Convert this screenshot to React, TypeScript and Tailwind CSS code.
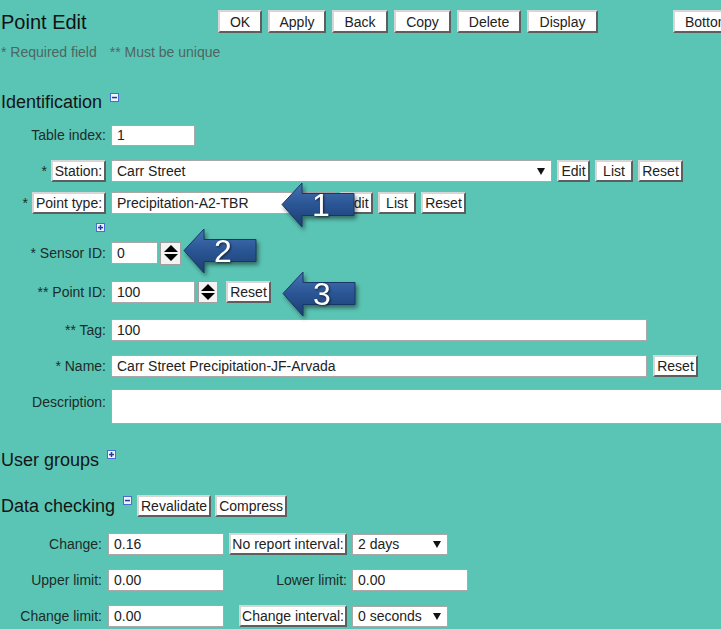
import React from "react";

const btnBase =
  "flex items-center justify-center bg-white border-2 border-t-[#d6d6d6] border-l-[#d6d6d6] border-r-[#5e5e5e] border-b-[#5e5e5e] text-[14px] text-[#222] leading-none box-border whitespace-nowrap";
const inputBase =
  "flex items-center bg-white border border-[#a8a8a8] pl-[5px] text-[14px] text-[#222] box-border whitespace-nowrap overflow-hidden";

function Btn({ children, className = "" }: { children: React.ReactNode; className?: string }) {
  return <div className={`${btnBase} ${className}`}>{children}</div>;
}

function Field({ children, className = "" }: { children?: React.ReactNode; className?: string }) {
  return <div className={`${inputBase} ${className}`}>{children}</div>;
}

function Select({ children, className = "" }: { children?: React.ReactNode; className?: string }) {
  return (
    <div className={`${inputBase} justify-between pr-[6px] ${className}`}>
      <span>{children}</span>
      <svg width="8" height="7" viewBox="0 0 8 7">
        <polygon points="0,0 8,0 4,7" fill="#111" />
      </svg>
    </div>
  );
}

function Spinner({ className = "" }: { className?: string }) {
  return (
    <div className={`flex items-center justify-center bg-[#f3f3f3] border border-[#a0a0a0] box-border ${className}`}>
      <svg width="14" height="16" viewBox="0 0 14 16">
        <polygon points="0,7 7,0 14,7" fill="#000" />
        <polygon points="0,9 14,9 7,16" fill="#000" />
      </svg>
    </div>
  );
}

function Toggle({ plus, className = "" }: { plus?: boolean; className?: string }) {
  return (
    <svg width="9" height="9" viewBox="0 0 9 9" className={className}>
      <rect x="0.5" y="0.5" width="8" height="8" fill="#eef3ff" stroke="#4a6ad6" />
      <rect x="2" y="3.8" width="5" height="1.5" fill="#24389a" />
      {plus && <rect x="3.75" y="2" width="1.5" height="5" fill="#24389a" />}
    </svg>
  );
}

function Arrow({ n, className = "" }: { n: string; className?: string }) {
  return (
    <div className={`absolute w-[75px] h-[46px] ${className}`}>
      <svg width="75" height="46" viewBox="0 0 75 46" className="absolute left-0 top-0 drop-shadow-[2px_3px_2px_rgba(0,0,0,0.45)]">
        <defs>
          <linearGradient id={`g${n}`} x1="0" y1="0" x2="0" y2="1">
            <stop offset="0" stopColor="#4673b3" />
            <stop offset="0.5" stopColor="#2a5594" />
            <stop offset="1" stopColor="#1b3d72" />
          </linearGradient>
        </defs>
        <polygon
          points="1,22.5 21,1 21,11.5 73,11.5 73,33.5 21,33.5 21,45"
          fill={`url(#g${n})`}
          stroke="#183766"
          strokeWidth="1"
        />
      </svg>
      <span className="absolute left-[30px] w-[20px] top-0 h-full flex items-center justify-center text-[32px] leading-none text-white drop-shadow-[1px_1px_1px_rgba(0,0,0,0.6)]">
        {n}
      </span>
    </div>
  );
}

function Label({ children, className = "" }: { children: React.ReactNode; className?: string }) {
  return <div className={`w-[106px] shrink-0 flex justify-end items-center text-[14px] text-[#1c2c29] ${className}`}>{children}</div>;
}

function DLabel({ children }: { children: React.ReactNode }) {
  return <div className="w-[102px] shrink-0 flex justify-end items-center text-[14px] text-[#1c2c29]">{children}</div>;
}

export default function App() {
  return (
    <div className="relative w-[721px] h-[629px] overflow-hidden bg-[#5bc5b5] font-['Liberation_Sans',Arial,sans-serif] text-[#222]">
      <div className="flex flex-col">
        {/* header */}
        <div className="mt-[10px] h-[23px] flex items-center">
          <div className="w-[218px] shrink-0 pl-[1px] text-[20px] leading-none text-[#111]">Point Edit</div>
          <div className="flex items-center gap-[6px]">
            <Btn className="w-[44px] h-[23px]">OK</Btn>
            <Btn className="w-[58px] h-[23px]">Apply</Btn>
            <Btn className="w-[56px] h-[23px]">Back</Btn>
            <Btn className="w-[57px] h-[23px]">Copy</Btn>
            <Btn className="w-[64px] h-[23px]">Delete</Btn>
            <Btn className="w-[71px] h-[23px]">Display</Btn>
            <Btn className="ml-[69px] w-[70px] h-[23px] justify-start pl-[10px]">Bottom</Btn>
          </div>
        </div>

        <div className="mt-[11px] h-[16px] flex items-center pl-[1px] text-[14px] leading-[16px] text-[#4d6661]">
          <span>* Required field</span>
          <span className="ml-[13px]">** Must be unique</span>
        </div>

        {/* Identification */}
        <div className="mt-[32px] h-[21px] flex items-start">
          <span className="pl-[1px] text-[18px] leading-[21px] text-[#141414]">Identification</span>
          <Toggle className="ml-[8px] mt-[1px]" />
        </div>

        <div className="mt-[12px] h-[21px] flex items-center">
          <Label>Table index:</Label>
          <Field className="ml-[5px] w-[84px] h-[21px]">1</Field>
        </div>

        <div className="mt-[14px] h-[22px] flex items-center">
          <Label>
            <span>*</span>
            <Btn className="ml-[4px] w-[55px] h-[22px]">Station:</Btn>
          </Label>
          <div className="ml-[5px] flex items-center gap-[5px]">
            <Select className="w-[441px] h-[22px]">Carr Street</Select>
            <Btn className="w-[33px] h-[22px]">Edit</Btn>
            <Btn className="w-[38px] h-[22px]">List</Btn>
            <Btn className="w-[45px] h-[22px]">Reset</Btn>
          </div>
        </div>

        <div className="mt-[10px] h-[22px] flex items-center">
          <Label>
            <span>*</span>
            <Btn className="ml-[4px] w-[74px] h-[22px]">Point type:</Btn>
          </Label>
          <div className="ml-[5px] flex items-center gap-[5px]">
            <Field className="w-[224px] h-[22px]">Precipitation-A2-TBR</Field>
            <Btn className="w-[33px] h-[22px]">Edit</Btn>
            <Btn className="w-[38px] h-[22px]">List</Btn>
            <Btn className="w-[45px] h-[22px]">Reset</Btn>
          </div>
        </div>

        <div className="mt-[9px] h-[9px] flex">
          <div className="w-[106px] flex justify-end pr-[1px]">
            <Toggle plus />
          </div>
        </div>

        <div className="mt-[10px] h-[22px] flex items-center">
          <Label>* Sensor ID:</Label>
          <Field className="ml-[5px] w-[47px] h-[22px]">0</Field>
          <Spinner className="ml-[2px] w-[21px] h-[23px]" />
        </div>

        <div className="mt-[17px] h-[22px] flex items-center">
          <Label>** Point ID:</Label>
          <Field className="ml-[5px] w-[84px] h-[22px]">100</Field>
          <Spinner className="ml-[3px] w-[20px] h-[22px]" />
          <Btn className="ml-[8px] w-[45px] h-[22px]">Reset</Btn>
        </div>

        <div className="mt-[16px] h-[22px] flex items-center">
          <Label>** Tag:</Label>
          <Field className="ml-[5px] w-[536px] h-[22px]">100</Field>
        </div>

        <div className="mt-[14px] h-[22px] flex items-center">
          <Label>* Name:</Label>
          <Field className="ml-[5px] w-[536px] h-[22px]">Carr Street Precipitation-JF-Arvada</Field>
          <Btn className="ml-[6px] w-[45px] h-[22px]">Reset</Btn>
        </div>

        <div className="mt-[12px] h-[35px] flex items-start">
          <Label className="pt-[3px]">Description:</Label>
          <Field className="ml-[5px] w-[620px] h-[35px] shrink-0" />
        </div>

        {/* User groups */}
        <div className="mt-[26px] h-[21px] flex items-start">
          <span className="pl-[1px] text-[18px] leading-[21px] text-[#141414]">User groups</span>
          <Toggle plus className="ml-[8px]" />
        </div>

        {/* Data checking */}
        <div className="mt-[24px] h-[22px] flex items-center">
          <span className="pl-[1px] text-[18px] leading-[21px] text-[#141414]">Data checking</span>
          <Toggle className="ml-[8px] self-start mt-[1px]" />
          <Btn className="ml-[5px] w-[74px] h-[22px]">Revalidate</Btn>
          <Btn className="ml-[4px] w-[72px] h-[22px]">Compress</Btn>
        </div>

        <div className="mt-[16px] h-[22px] flex items-center">
          <DLabel>Change:</DLabel>
          <Field className="ml-[6px] w-[116px] h-[22px]">0.16</Field>
          <div className="ml-[5px] w-[118px] flex justify-end">
            <Btn className="w-[118px] h-[22px]">No report interval:</Btn>
          </div>
          <Select className="ml-[5px] w-[96px] h-[21px]">2 days</Select>
        </div>

        <div className="mt-[14px] h-[22px] flex items-center">
          <DLabel>Upper limit:</DLabel>
          <Field className="ml-[6px] w-[116px] h-[22px]">0.00</Field>
          <div className="ml-[5px] w-[118px] flex justify-end text-[14px] text-[#1c2c29]">Lower limit:</div>
          <Field className="ml-[5px] w-[116px] h-[22px]">0.00</Field>
        </div>

        <div className="mt-[14px] h-[22px] flex items-center">
          <DLabel>Change limit:</DLabel>
          <Field className="ml-[6px] w-[116px] h-[22px]">0.00</Field>
          <div className="ml-[5px] w-[118px] flex justify-end">
            <Btn className="w-[108px] h-[22px]">Change interval:</Btn>
          </div>
          <Select className="ml-[5px] w-[96px] h-[21px]">0 seconds</Select>
        </div>
      </div>

      <Arrow n="1" className="left-[281px] top-[182px]" />
      <Arrow n="2" className="left-[183px] top-[228px]" />
      <Arrow n="3" className="left-[282px] top-[271px]" />
    </div>
  );
}
